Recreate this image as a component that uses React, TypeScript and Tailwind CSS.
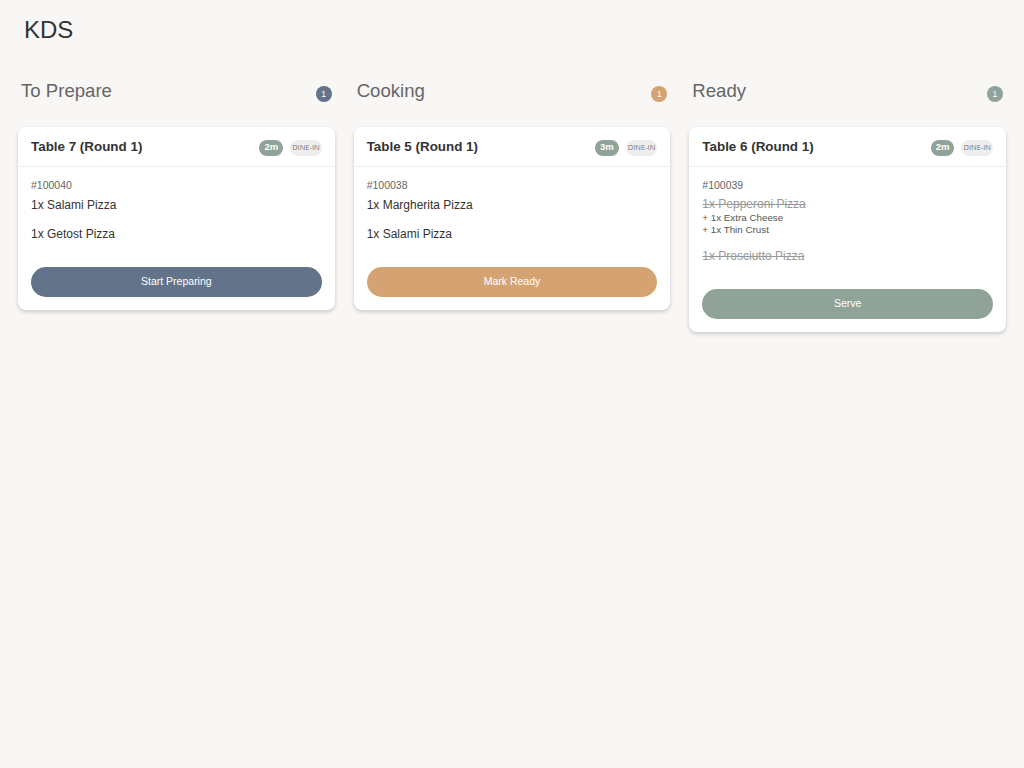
import React from "react";

type Item = { name: string; mods?: string[]; done?: boolean };

type Ticket = {
	table: string;
	age: string;
	order: string;
	items: Item[];
	action: string;
};

type Column = {
	title: string;
	dot: string;
	button: string;
	tickets: Ticket[];
};

const columns: Column[] = [
	{
		title: "To Prepare",
		dot: "bg-[#637389]",
		button: "bg-[#637389]",
		tickets: [
			{
				table: "Table 7 (Round 1)",
				age: "2m",
				order: "#100040",
				items: [{ name: "1x Salami Pizza" }, { name: "1x Getost Pizza" }],
				action: "Start Preparing",
			},
		],
	},
	{
		title: "Cooking",
		dot: "bg-[#d5a372]",
		button: "bg-[#d5a372]",
		tickets: [
			{
				table: "Table 5 (Round 1)",
				age: "3m",
				order: "#100038",
				items: [{ name: "1x Margherita Pizza" }, { name: "1x Salami Pizza" }],
				action: "Mark Ready",
			},
		],
	},
	{
		title: "Ready",
		dot: "bg-[#8fa398]",
		button: "bg-[#8fa398]",
		tickets: [
			{
				table: "Table 6 (Round 1)",
				age: "2m",
				order: "#100039",
				items: [
					{ name: "1x Pepperoni Pizza", mods: ["+ 1x Extra Cheese", "+ 1x Thin Crust"], done: true },
					{ name: "1x Prosciutto Pizza", done: true },
				],
				action: "Serve",
			},
		],
	},
];

const TicketCard = ({ ticket, button }: { ticket: Ticket; button: string }) => (
	<article className="rounded-lg bg-white shadow-[0_2px_4px_rgba(0,0,0,0.18)]">
		<header className="flex h-10 items-center justify-between border-b border-[#f0efed] px-[13px] pt-[2px]">
			<h3 className="text-[13.4px] font-bold text-[#333]">{ticket.table}</h3>
			<div className="flex items-center gap-[7px]">
				<span className="flex h-4 items-center rounded-full bg-[#8fa398] px-[5px] text-[9.5px] font-bold text-white">
					{ticket.age}
				</span>
				<span className="flex h-4 items-center rounded-full bg-[#eeeeee] px-[2px] font-['Open_Sans',sans-serif] text-[7.5px] text-[#777]">
					DINE-IN
				</span>
			</div>
		</header>
		<div className="px-[13px] pb-[13px] pt-[11px]">
			<p className="mb-[5px] text-[10.5px] leading-[14px] text-[#666]">{ticket.order}</p>
			{ticket.items.map((item) => (
				<div key={item.name} className="mb-[13px]">
					<p
						className={
							item.done
								? "text-[12px] leading-[15px] text-[#999] line-through"
								: "text-[12px] leading-4 text-[#333]"
						}
					>
						{item.name}
					</p>
					{item.mods?.map((mod) => (
						<p key={mod} className="text-[9.8px] leading-3 text-[#555]">
							{mod}
						</p>
					))}
				</div>
			))}
			<button
				type="button"
				className={`${button} mt-[25px] flex h-[30px] w-full items-center justify-center rounded-full text-[10.5px] text-white`}
			>
				{ticket.action}
			</button>
		</div>
	</article>
);

const App = () => {
	return (
		<div className="min-h-screen bg-[#f8f7f5] font-['Liberation_Sans',Arial,sans-serif]">
			<h1 className="px-6 pt-[15px] text-[24px] leading-[30px] text-[#333]">KDS</h1>
			<div className="mt-8 grid grid-cols-3 gap-[19px] px-[18px]">
				{columns.map((col) => (
					<section key={col.title}>
						<div className="mb-[22px] flex h-7 items-center justify-between px-[3px]">
							<h2 className="text-[18.6px] text-[#666]">{col.title}</h2>
							<span
								className={`${col.dot} mt-[6px] flex h-4 w-4 items-center justify-center rounded-full text-[8.5px] text-white`}
							>
								{col.tickets.length}
							</span>
						</div>
						<div className="flex flex-col gap-3">
							{col.tickets.map((t) => (
								<TicketCard key={t.order} ticket={t} button={col.button} />
							))}
						</div>
					</section>
				))}
			</div>
		</div>
	);
};

export default App;
